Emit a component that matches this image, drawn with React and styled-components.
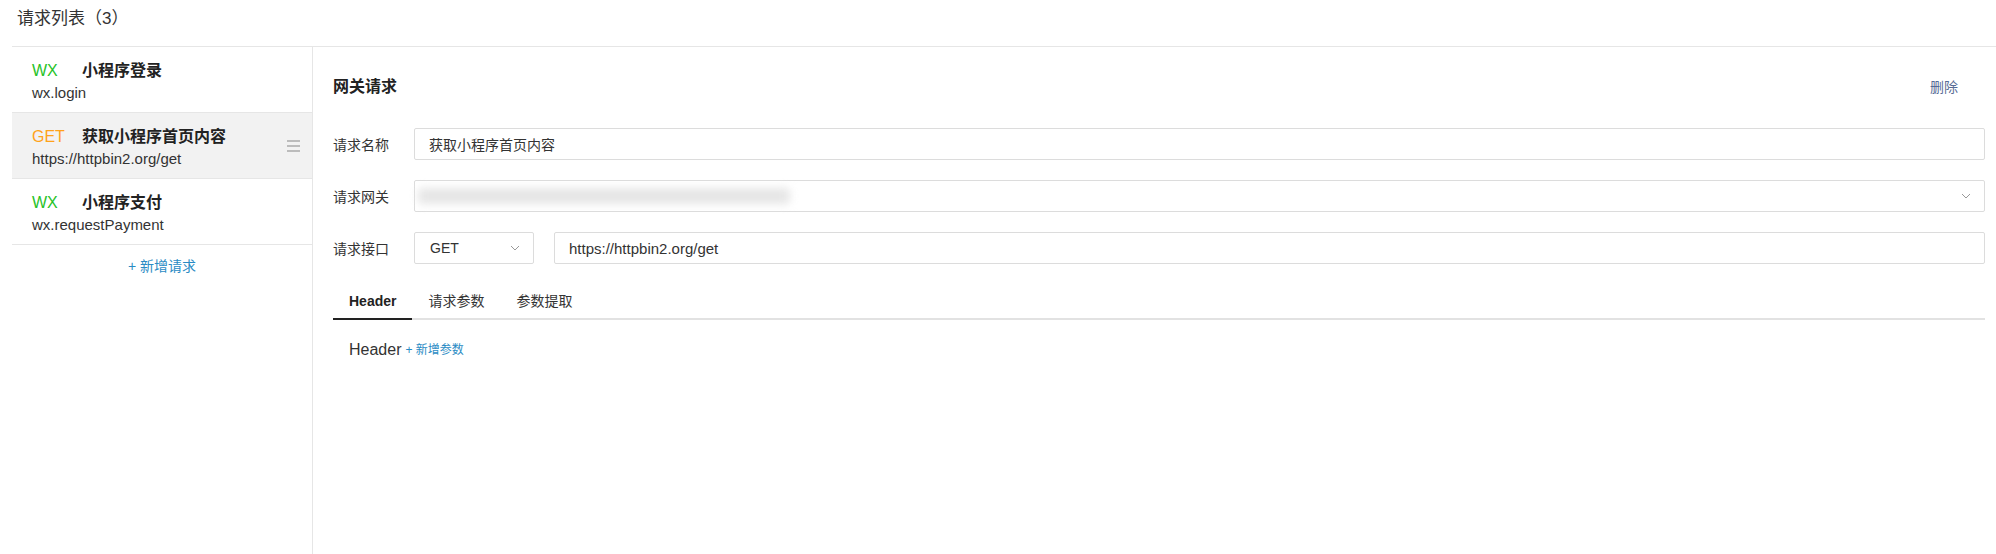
import React from 'react'
import styled, { createGlobalStyle } from 'styled-components'

const GlobalStyle = createGlobalStyle`
  html, body {
    margin: 0;
    padding: 0;
    background: #fff;
  }
  body {
    font-family: "Liberation Sans", "Noto Sans CJK SC", sans-serif;
    color: #333;
  }
`

const requests = [
  { id: 1, method: 'WX', title: '小程序登录', sub: 'wx.login' },
  { id: 2, method: 'GET', title: '获取小程序首页内容', sub: 'https://httpbin2.org/get', active: true },
  { id: 3, method: 'WX', title: '小程序支付', sub: 'wx.requestPayment' },
]

const methodColors = {
  WX: '#27c227',
  GET: '#ffa21a',
}

const Chevron = () => (
  <svg width="10" height="6" viewBox="0 0 10 6" fill="none">
    <path d="M1 1l4 4 4-4" stroke="#999" strokeWidth="1" />
  </svg>
)

export default function App() {
  return (
    <>
      <GlobalStyle />
      <Page>
        <PageTitle>请求列表（3）</PageTitle>
        <Body>
          <Sidebar>
            {requests.map((r) => (
              <Item key={r.id} $active={r.active}>
                <ItemText>
                  <ItemHead>
                    <Method $color={methodColors[r.method]}>{r.method}</Method>
                    <ItemTitle>{r.title}</ItemTitle>
                  </ItemHead>
                  <ItemSub>{r.sub}</ItemSub>
                </ItemText>
                {r.active && (
                  <Handle>
                    <i />
                    <i />
                    <i />
                  </Handle>
                )}
              </Item>
            ))}
            <AddRequest>+ 新增请求</AddRequest>
          </Sidebar>

          <Main>
            <MainHeader>
              <MainTitle>网关请求</MainTitle>
              <DeleteLink>删除</DeleteLink>
            </MainHeader>

            <FormRow>
              <Label>请求名称</Label>
              <Input>获取小程序首页内容</Input>
            </FormRow>
            <FormRow>
              <Label>请求网关</Label>
              <Select $grow>
                <Blurred />
                <Chevron />
              </Select>
            </FormRow>
            <FormRow>
              <Label>请求接口</Label>
              <Select $width="120px">
                <span>GET</span>
                <Chevron />
              </Select>
              <Input $latin $gap>https://httpbin2.org/get</Input>
            </FormRow>

            <Tabs>
              <Tab $active>Header</Tab>
              <Tab>请求参数</Tab>
              <Tab>参数提取</Tab>
            </Tabs>
            <TabBody>
              <TabBodyTitle>Header</TabBodyTitle>
              <AddParam>+ 新增参数</AddParam>
            </TabBody>
          </Main>
        </Body>
      </Page>
    </>
  )
}

const Page = styled.div`
  padding-left: 12px;
  height: 554px;
  display: flex;
  flex-direction: column;
  box-sizing: border-box;
`

const PageTitle = styled.div`
  font-size: 17px;
  line-height: 24px;
  padding: 7px 0 15px 5px;
  color: #333;
  border-bottom: 1px solid #e6e6e6;
`

const Body = styled.div`
  flex: 1;
  display: flex;
`

const Sidebar = styled.div`
  width: 300px;
  border-right: 1px solid #e6e6e6;
`

const Item = styled.div`
  display: flex;
  align-items: center;
  height: 66px;
  box-sizing: border-box;
  padding: 0 12px 0 20px;
  border-bottom: 1px solid #e6e6e6;
  background: ${(p) => (p.$active ? '#f2f2f2' : '#fff')};
`

const ItemText = styled.div`
  flex: 1;
  padding-top: 2px;
`

const ItemHead = styled.div`
  display: flex;
  line-height: 24px;
`

const Method = styled.span`
  width: 50px;
  font-size: 16px;
  color: ${(p) => p.$color};
`

const ItemTitle = styled.span`
  font-size: 16px;
  font-weight: bold;
  color: #222;
`

const ItemSub = styled.div`
  font-size: 15px;
  line-height: 20px;
  color: #333;
`

const Handle = styled.div`
  display: flex;
  flex-direction: column;
  gap: 3px;
  i {
    display: block;
    width: 13px;
    height: 2px;
    background: #bcbcbc;
  }
`

const AddRequest = styled.div`
  text-align: center;
  font-size: 14px;
  line-height: 22px;
  padding: 10px 0;
  color: #2a8bc4;
`

const Main = styled.div`
  flex: 1;
  padding: 28px 11px 0 20px;
`

const MainHeader = styled.div`
  display: flex;
  justify-content: space-between;
  align-items: center;
  line-height: 24px;
  margin-bottom: 29px;
`

const MainTitle = styled.div`
  font-size: 16px;
  font-weight: bold;
  color: #222;
`

const DeleteLink = styled.div`
  font-size: 14px;
  color: #576b95;
  margin-right: 27px;
`

const FormRow = styled.div`
  display: flex;
  align-items: center;
  gap: 22px;
  margin-bottom: 20px;
`

const Label = styled.div`
  width: 59px;
  font-size: 14px;
  color: #333;
`

const Input = styled.div`
  flex: 1;
  height: 32px;
  box-sizing: border-box;
  border: 1px solid #dcdcdc;
  border-radius: 2px;
  padding-left: 14px;
  margin-left: ${(p) => (p.$gap ? '-2px' : '0')};
  display: flex;
  align-items: center;
  font-size: ${(p) => (p.$latin ? '15px' : '14px')};
  color: #333;
`

const Select = styled.div`
  ${(p) => (p.$grow ? 'flex: 1;' : `width: ${p.$width};`)}
  height: 32px;
  box-sizing: border-box;
  border: 1px solid #dcdcdc;
  border-radius: 2px;
  padding: 0 13px 0 ${(p) => (p.$grow ? '3px' : '15px')};
  display: flex;
  align-items: center;
  justify-content: space-between;
  font-size: 14px;
  color: #333;
`

const Blurred = styled.div`
  width: 372px;
  height: 16px;
  background: #e6e6e6;
  border-radius: 4px;
  filter: blur(4px);
`

const Tabs = styled.div`
  display: flex;
  margin-top: 4px;
  border-bottom: 2px solid #e2e2e2;
`

const Tab = styled.div`
  padding: 6px 16px;
  line-height: 22px;
  font-size: 14px;
  font-weight: ${(p) => (p.$active ? 'bold' : 'normal')};
  color: ${(p) => (p.$active ? '#222' : '#333')};
  margin-bottom: -2px;
  border-bottom: 2px solid ${(p) => (p.$active ? '#222' : 'transparent')};
`

const TabBody = styled.div`
  display: flex;
  align-items: center;
  gap: 4px;
  padding: 19px 16px 0;
  line-height: 22px;
`

const TabBodyTitle = styled.span`
  font-size: 16px;
  color: #333;
`

const AddParam = styled.span`
  font-size: 12px;
  color: #2a8bc4;
`
